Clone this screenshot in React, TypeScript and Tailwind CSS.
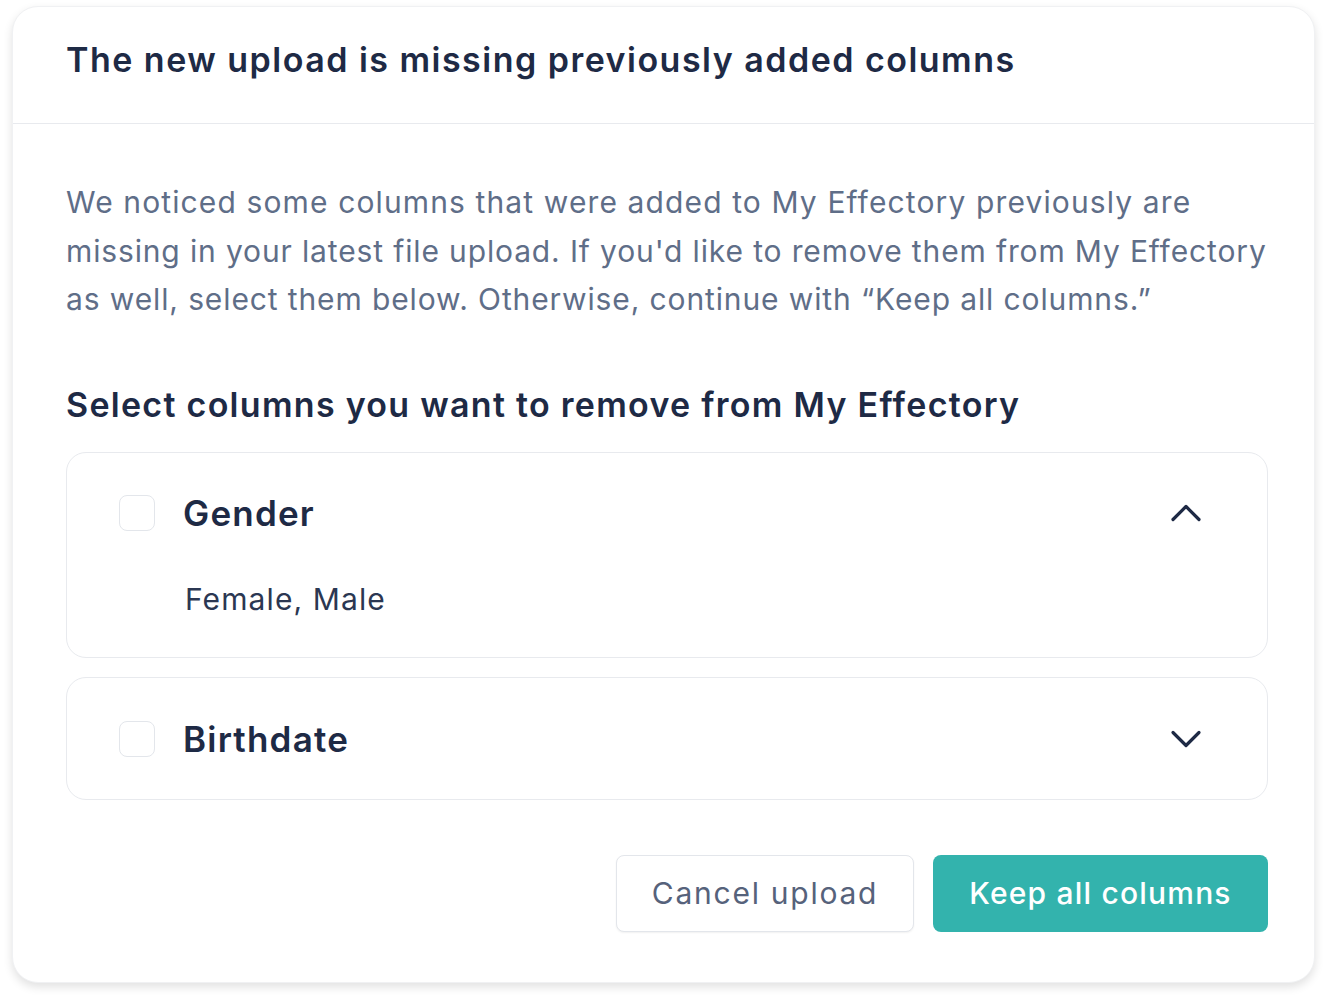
function Chevron({ up }: { up?: boolean }) {
  return (
    <svg width="32" height="20" viewBox="0 0 32 20" fill="none" className="shrink-0">
      <polyline
        points={up ? '3,16.5 16,3.5 29,16.5' : '3,3.5 16,16.5 29,3.5'}
        stroke="#1e2a45"
        strokeWidth="3.2"
        strokeLinecap="round"
        strokeLinejoin="round"
      />
    </svg>
  );
}

function Checkbox() {
  return <div className="w-[36px] h-[36px] shrink-0 rounded-[8px] border border-[#e3e6eb] bg-white" />;
}

export default function App() {
  return (
    <div
      className="w-[1326px] h-[998px] bg-white pl-[12px] pt-[6px]"
      style={{ fontFamily: 'Inter, "Noto Sans", sans-serif' }}
    >
      <div className="w-[1303px] rounded-[26px] bg-white border border-[#f0f1f3] shadow-[0_4px_10px_rgba(0,0,0,0.12)]">
        <div className="pt-[33px] pb-[43px] pl-[53px] border-b border-[#e8eaee]">
          <h1 className="text-[34px] leading-[40px] font-semibold tracking-[1.48px] text-[#1e2a45] whitespace-nowrap">
            The new upload is missing previously added columns
          </h1>
        </div>
        <div className="pl-[53px] pr-[46px] pt-[54px] pb-[50px]">
          <p className="text-[30px] leading-[48.5px] text-[#5f6e88] whitespace-nowrap">
            <span className="block tracking-[1.12px]">We noticed some columns that were added to My Effectory previously are</span>
            <span className="block tracking-[0.86px]">missing in your latest file upload. If you'd like to remove them from My Effectory</span>
            <span className="block tracking-[0.88px]">as well, select them below. Otherwise, continue with “Keep all columns.”</span>
          </p>
          <h2 className="mt-[61px] text-[34px] leading-[40px] font-semibold tracking-[1.28px] text-[#1e2a45] whitespace-nowrap">
            Select columns you want to remove from My Effectory
          </h2>

          <div className="mt-[27px] rounded-[20px] border border-[#e8eaee] pt-[42px] pb-[38px] pl-[52px] pr-[65px]">
            <div className="flex items-center h-[36px]">
              <Checkbox />
              <span className="ml-[28px] text-[35px] leading-[40px] font-semibold tracking-[1.2px] text-[#1e2a45]">Gender</span>
              <div className="ml-auto">
                <Chevron up />
              </div>
            </div>
            <div className="mt-[48px] pl-[66px] text-[30px] leading-[40px] tracking-[1.1px] text-[#2b3752]">Female, Male</div>
          </div>

          <div className="mt-[19px] rounded-[20px] border border-[#e8eaee] pt-[43px] pb-[42px] pl-[52px] pr-[65px]">
            <div className="flex items-center h-[36px]">
              <Checkbox />
              <span className="ml-[28px] text-[35px] leading-[40px] font-semibold tracking-[1.2px] text-[#1e2a45]">Birthdate</span>
              <div className="ml-auto">
                <Chevron />
              </div>
            </div>
          </div>

          <div className="mt-[55px] flex justify-end gap-[19px]">
            <button className="w-[298px] h-[77px] rounded-[8px] border border-[#e3e6eb] bg-white shadow-[0_1px_2px_rgba(0,0,0,0.06)] text-[30px] tracking-[1.75px] text-[#56627b]">
              Cancel upload
            </button>
            <button className="w-[335px] h-[77px] rounded-[8px] bg-[#33b3ad] text-[30px] font-medium tracking-[1.2px] text-white">
              Keep all columns
            </button>
          </div>
        </div>
      </div>
    </div>
  );
}
